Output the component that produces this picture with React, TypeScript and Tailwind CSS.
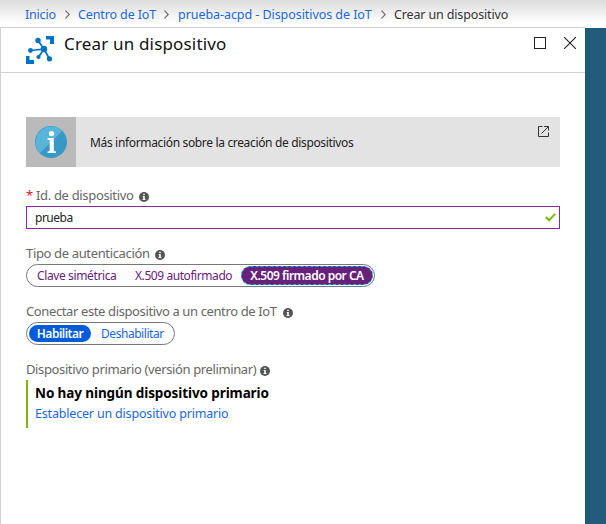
import React from "react";

function Chevron() {
  return (
    <svg className="block h-[9px] w-[5px] shrink-0" viewBox="0 0 5 9" fill="none" stroke="#666" strokeWidth="1.1">
      <path d="M.5 .6 4.3 4.5 .5 8.4" />
    </svg>
  );
}

function Info() {
  return (
    <svg className="block size-[10px] shrink-0 translate-y-[2px]" viewBox="0 0 10 10">
      <circle cx="5" cy="5" r="5" fill="#555" />
      <path d="M4.2 1.7h1.6v1.4H4.2zM3.6 4h2.2v3.1h.7v.9H3.5v-.9h.7V4.8h-.6z" fill="#fff" />
    </svg>
  );
}

function Label({ children, className }: { children: React.ReactNode; className: string }) {
  return (
    <div className="flex h-[18px] items-center text-[#666]">
      <span className={className}>{children}</span>
      <Info />
    </div>
  );
}

export default function App() {
  return (
    <div className="flex h-[524px] w-[606px] flex-col overflow-hidden bg-white font-['Noto_Sans','Open_Sans',sans-serif] text-[13px] leading-[18px] whitespace-nowrap">
      <nav className="flex h-[27px] shrink-0 items-center bg-linear-to-b from-[#dcdcdc] to-white to-85% pt-[2px] pl-[25px] text-[12.5px] text-[#1b66dd]">
        <a className="w-[40px] tracking-[-0.2px]">Inicio</a>
        <Chevron />
        <a className="ml-[8px] w-[86px] tracking-[-0.12px]">Centro de IoT</a>
        <Chevron />
        <a className="ml-[9px] w-[203px] tracking-[-0.06px]">prueba-acpd - Dispositivos de IoT</a>
        <Chevron />
        <span className="ml-[8px] tracking-[-0.14px] text-[#333]">Crear un dispositivo</span>
      </nav>
      <div className="flex min-h-0 flex-1">
        <main className="w-[585px] border-t border-l border-[#d2d2d2] bg-white">
          <header className="flex h-[45px] border-b border-[#d2d2d2] pl-[25px]">
            <svg className="mt-[8px] block size-7 shrink-0" viewBox="0 0 28 28" fill="#0072c6">
              <path d="M20 0h8v8h-4V3.5h-4zM0 20h3.5v4H8v4H0z" />
              <path d="M12 4.5 18 13 4.5 14.5M18 13l5.5 10M18 13l-5.5 8" fill="none" stroke="#0072c6" strokeWidth="1.7" />
              <circle cx="12" cy="4.5" r="2.7" />
              <circle cx="18" cy="13" r="3.2" />
              <circle cx="4.5" cy="14.5" r="2.4" />
              <circle cx="12.5" cy="21" r="2.1" />
              <circle cx="23.5" cy="22.8" r="2.6" />
            </svg>
            <h1 className="mt-[4px] ml-[10px] text-[17px] leading-6 tracking-[0.17px] text-[#111]">Crear un dispositivo</h1>
            <div className="mt-[9px] mr-[9px] ml-auto flex gap-[18px]">
              <div className="size-3 border border-[#222]" />
              <svg className="block size-3" viewBox="0 0 12 12" fill="none" stroke="#222" strokeWidth="1.1">
                <path d="m0 0 12 12M12 0 0 12" />
              </svg>
            </div>
          </header>

          <div className="px-[25px] pt-[44px]">
            <section className="flex h-[50px] items-center bg-[#e3e3e3] text-[12px] text-[#222]">
              <div className="flex size-[50px] items-center justify-center bg-[#bababa]">
                <svg className="block size-8" viewBox="0 0 32 32">
                  <circle cx="16" cy="16" r="16" fill="#3999c6" />
                  <path d="M27.3 4.7A16 16 0 0 0 4.7 27.3z" fill="#59b4d9" />
                  <circle cx="16.5" cy="7.6" r="2.7" fill="#fff" />
                  <path d="M12.5 12h6.3v13l2.2.6V27h-8.5v-1.4l2.2-.6V13.9l-2.2-.5z" fill="#fff" />
                </svg>
              </div>
              <span className="ml-[14px] pt-px tracking-[-0.34px]">Más información sobre la creación de dispositivos</span>
              <svg className="mr-[11px] mb-[21px] ml-auto block size-[11px]" viewBox="0 0 11 11" fill="none" stroke="#333">
                <path d="M4.5 .5h-4v10h10V6.5M6 .5h4.5v4M10.5 .5 3.5 7.5" />
              </svg>
            </section>

            <div className="mt-[19px] flex">
              <span className="w-[10px] text-[#e81123]">*</span>
              <Label className="w-[103px] tracking-[-0.33px]">Id. de dispositivo</Label>
            </div>
            <div className="mt-[2px] flex h-[23px] items-center border border-[#8926a5] pr-[3px] pl-2 text-[12px] text-[#222]">
              <span className="tracking-[-0.5px]">prueba</span>
              <svg className="ml-auto block h-[9px] w-[11px]" viewBox="0 0 10 8" fill="none" stroke="#7fba00" strokeWidth="1.9">
                <path d="m.7 3.5 3 3L9.3.7" />
              </svg>
            </div>

            <div className="mt-[15px]">
              <Label className="w-[129px] tracking-[-0.35px]">Tipo de autenticación</Label>
            </div>
            <div className="mt-[2px] flex h-[23px] w-[349px] items-center rounded-full border border-[#777] text-[12px] text-[#68217a]">
              <span className="ml-[10px] w-[98px] tracking-[-0.38px]">Clave simétrica</span>
              <span className="w-[106px] tracking-[-0.43px]">X.509 autofirmado</span>
              <span className="flex h-[19px] w-[132px] items-center justify-center rounded-full border border-dashed border-[#00bcf2] bg-[#68217a] font-semibold tracking-[-0.5px] text-white">X.509 firmado por CA</span>
            </div>

            <div className="mt-[15px]">
              <Label className="w-[257px] tracking-[-0.38px]">Conectar este dispositivo a un centro de IoT</Label>
            </div>
            <div className="mt-[2px] flex h-[23px] w-[149px] items-center rounded-full border border-[#777] text-[12px] text-[#1b66dd]">
              <span className="ml-[2px] flex h-[17px] w-[62px] items-center justify-center rounded-full bg-[#015cda] font-semibold tracking-[-0.5px] text-white">Habilitar</span>
              <span className="ml-[10px] tracking-[-0.45px]">Deshabilitar</span>
            </div>

            <div className="mt-[15px]">
              <Label className="w-[234px] tracking-[-0.38px]">Dispositivo primario (versión preliminar)</Label>
            </div>
            <div className="mt-[2px] h-12 border-l-2 border-[#7fba00] pt-1 pl-[7px]">
              <p className="w-fit text-[13.5px] leading-[18px] font-bold tracking-[-0.1px] text-black">No hay ningún dispositivo primario</p>
              <a className="block w-fit pt-[3px] text-[12.5px] leading-[18px] tracking-[-0.18px] text-[#1b66dd]">Establecer un dispositivo primario</a>
            </div>
          </div>
        </main>
        <aside className="mt-px flex-1 bg-linear-to-r from-[#205675] to-[#225b7c] to-30%" />
      </div>
    </div>
  );
}
